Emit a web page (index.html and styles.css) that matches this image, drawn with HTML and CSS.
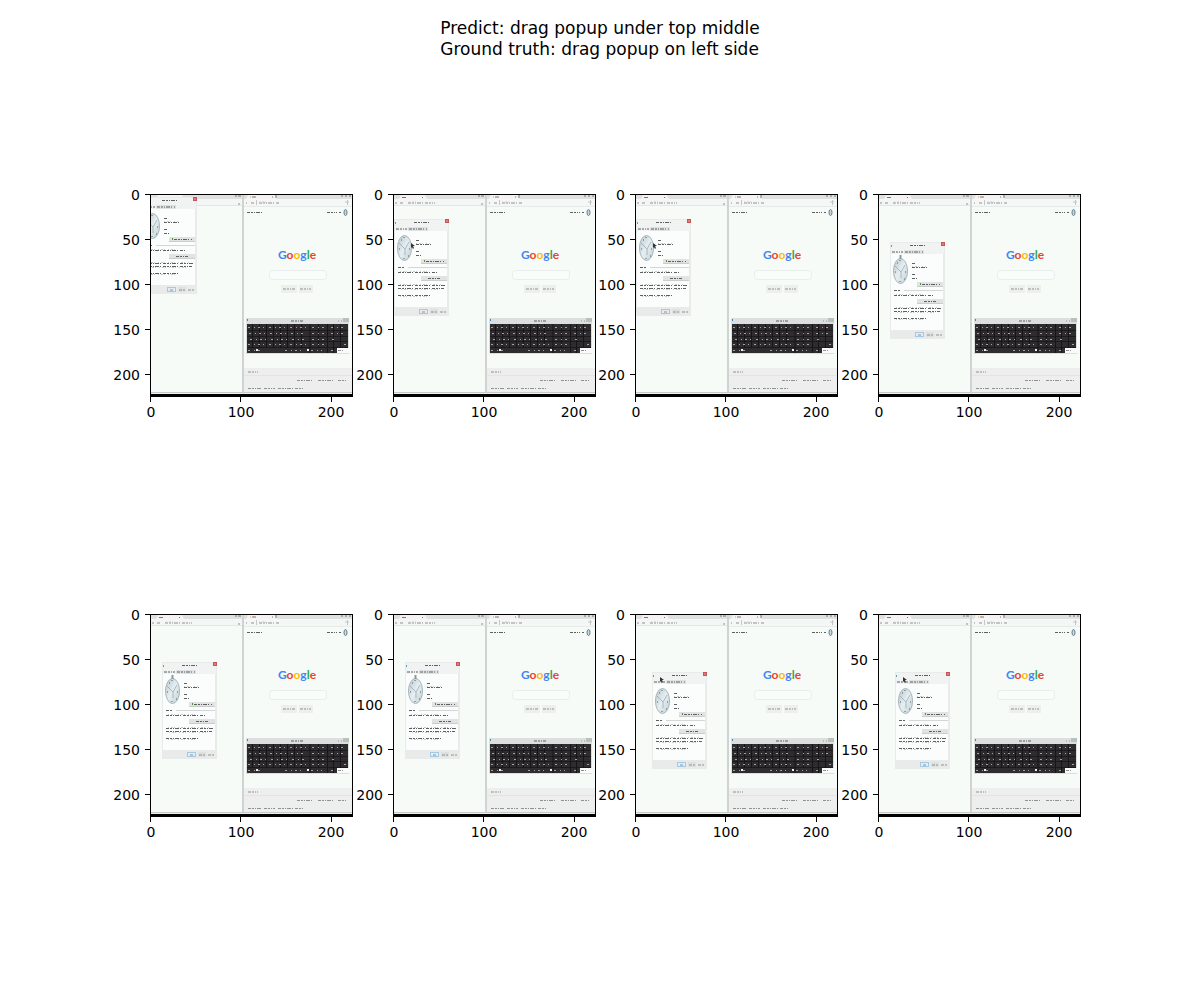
FILE: index.html
```
<!DOCTYPE html>
<html lang="en">
<head>
<meta charset="utf-8">
<meta name="viewport" content="width=device-width, initial-scale=1">
<title>Prediction: drag popup</title>
<link rel="stylesheet" href="styles.css">
</head>
<body>
<svg class="library" aria-hidden="true">
  <defs>
    <linearGradient id="glass" x1="0" y1="0" x2="1" y2="1">
      <stop offset="0" stop-color="#b9c8ce"/><stop offset=".5" stop-color="#e6eef1"/><stop offset="1" stop-color="#c2d0d5"/>
    </linearGradient>
    <clipPath id="frame-clip"><rect x="0" y="0" width="203" height="203"/></clipPath>

    <!-- Two browser windows, on-screen keyboard and taskbar -->
    <g id="desktop">
      <rect width="203" height="203" fill="#f6fbf8"/>
      <rect width="92" height="5" fill="#dfe1e1"/>
      <path d="M6 5 8 1H32L34 5Z" fill="#f6f2f4"/>
      <path d="M9 3.5h4M29 3.5h1M85 2h2M88 2h3" stroke="#777"/>
      <rect y="5" width="92" height="6" fill="#f3f6f5"/>
      <path d="M0 11.5H92" stroke="#e3e8e5"/>
      <path class="ink" d="M2 9h2M7 9h3M15 9h27M88 10h2"/>
      <path class="ink faint" d="M16 8h9"/>
      <rect x="92" width="2" height="199" fill="#cfd3d1"/>
      <rect x="94" width="109" height="5" fill="#dfe1e1"/>
      <path d="M96 5 98 1H125L127 5Z" fill="#f6f2f4"/>
      <path d="M100 3h1" stroke="#e8a33c"/>
      <path d="M102 3h4M122 3h1M126 1v3M191 2h2M195 2h2M199 2h2" stroke="#777"/>
      <rect x="94" y="5" width="109" height="7" fill="#f4f7f6"/>
      <path d="M94 12.500H203" stroke="#e6eae8"/>
      <path d="M106.500 6v5M195 8h4M197.500 6v5" stroke="#c3c8c6"/>
      <path class="ink" d="M96 9h1M101 9h3M109 9h20"/>
      <path class="ink faint" d="M109 8h7"/>
      <path class="ink dark" d="M97 18.500h15M177 18.500h10M189 18.500h2"/>
      <ellipse cx="195.500" cy="18.500" rx="1.500" ry="3" fill="#c9d7df" stroke="#627b87"/>
      <rect x="119.500" y="76.500" width="57" height="9" rx="3" fill="#f8fcfa" stroke="#e9eeeb"/>
      <path d="M131 91h16v8h-16zM149 91h14v8h-14z" fill="#ecefed"/>
      <path class="ink" d="M133 95h12M150 95h11"/>
      <rect x="96" y="124" width="103" height="36" fill="#dcdfde"/>
      <rect x="97" y="125" width="1" height="2" fill="#3c8bc9"/>
      <path class="ink dark" d="M141 127h12"/>
      <path d="M188 127h1M191 127h1" stroke="#999"/>
      <rect x="193" y="124" width="6" height="4" fill="#b9c1bd"/>
      <rect x="97" y="130" width="101" height="29" fill="#2f2c2f"/>
      <path d="M97 136.500H198M97 142.500H198M97 147.500H198M97 153.500H198" stroke="#1c1a1c"/>
      <path d="M102.500 130v24M109.500 130v24M116.500 130v24M123.500 130v24M130.500 130v24M137.500 130v24M144.500 130v24M151.500 130v24M160 130v29M168.500 130v24M177.500 130v29M183.500 130v29M190.500 130v24" stroke="#171517"/>
      <path class="key" d="M98 133.500h58M99 139.500h57M100 145.500h54M98 150.500h59M98 156.500h14M135 156.500h19M162 133.500h14M162 139.500h14M162 145.500h12M162 150.500h12M161 156.500h11M181 133.500h15M181 139.500h15M182 145.500h3M194 150.500h3M181 156.500h4"/>
      <path d="M106 155h2v2h-2zM157 155h2v2h-2z" fill="#eee"/>
      <rect x="187" y="154" width="12" height="5" fill="#fafafa"/>
      <path class="ink" d="M188 156.500h5"/>
      <rect x="94" y="174" width="109" height="24" fill="#eee"/>
      <path d="M94 181.500H203" stroke="#e4e4e4"/>
      <path class="ink" d="M98 178h10M147 186.500h17M168 186.500h15M188 186.500h9M98 194.500h13M114 194.500h11M128 194.500h26"/>
      <rect y="198" width="203" height="1" fill="#c6cac8"/>
      <rect y="199" width="203" height="1" fill="#eceeed"/>
      <rect y="200" width="203" height="3" fill="#000"/>
    </g>

    <!-- Date and time dialog -->
    <g id="dialog">
      <rect width="55" height="97" fill="#e9ebeb"/>
      <rect x="1" y="1" width="53" height="11" fill="#f1f2f2"/>
      <rect x="1" y="12" width="52" height="76" fill="#fbfcfc"/>
      <path d="M1 4h1" stroke="#53a6bf" stroke-width="2"/>
      <rect x="51" y="0" width="4" height="4" fill="#c95358"/>
      <path d="M52 1l2 2M54 1l-2 2" stroke="#eba9aa" stroke-width=".5"/>
      <path class="ink dark" d="M20 3.500h15"/>
      <rect x="14" y="8" width="20" height="4" fill="#dfe2e2"/>
      <path class="ink dark" d="M2 10h11M15 10h18"/>
      <ellipse cx="10.500" cy="29" rx="7" ry="12.500" fill="url(#glass)" stroke="#a6b6bc"/>
      <path d="M5 24l6 6 4-7M11 30v6" fill="none" stroke="#84969e" stroke-width=".6"/>
      <path d="M10 18v1M10 39v1M5 30h1M15 30h1M7 21h1M14 37h1" stroke="#50626b"/>
      <path class="ink dark" d="M22 21.500h4M22 25.500h17M22 32.500h4M22 36.500h5"/>
      <path d="M27 40h26v4H27zM27 57h26v4H27z" fill="#e1e3e3"/>
      <path d="M27 44.500h26M27 61.500h26" stroke="#c9cdcd"/>
      <path d="M30 42h1" stroke="#55923d" stroke-width="2"/>
      <path class="ink dark" d="M32 42.500h18M34 59.500h12"/>
      <path d="M14 48.500h39" stroke="#d3d6d6"/>
      <path class="ink dark" d="M4 48.500h6M4 53.500h39M4 66.500h47M4 69.500h46M4 76.500h33"/>
      <path class="ink faint" d="M6 65.500h42M7 70.500h38M6 52.500h30M22 24.500h14M6 77.500h28"/>
      <rect x="25.500" y="90.500" width="8" height="4" fill="#e3edf4" stroke="#a3c9e4"/>
      <rect x="36" y="90" width="8" height="5" fill="#dfe1e1"/>
      <path class="ink" d="M28 93h3M37 93h6M46 93h7"/>
    </g>
    <path id="stem" d="M10.500 13v4" stroke="#87999f" stroke-width="2"/>
    <path id="pointer" d="M0 0v5l1-1 1 2 1-1-1-2h2Z" fill="#333"/>
    <path id="ticks" d="M-5 .5H0M-5 45.500H0M-5 90.500H0M-5 135.500H0M-5 180.500H0M.5 203v5M90.500 203v5M181.500 203v5"/>
  </defs>
</svg>

<main class="figure">
  <h1 class="title">Predict: drag popup under top middle<br>Ground truth: drag popup on left side</h1>
  <div class="plots">
    <svg class="plot" width="242" height="240" viewBox="-38 -10 242 240" role="img" aria-label="Frame 1">
      <g clip-path="url(#frame-clip)"><use href="#desktop"/><use href="#dialog" x="-8" y="3"/></g>
      <text class="logo" x="147" y="65"><tspan class="blue">G</tspan><tspan class="red">o</tspan><tspan class="yellow">o</tspan><tspan class="blue">g</tspan><tspan class="green">l</tspan><tspan class="red">e</tspan></text>
      <rect class="frame" x=".5" y=".5" width="202" height="202"/><use class="tick" href="#ticks"/>
      <g class="y-axis"><text x="-10" y="6">0</text><text x="-10" y="51">50</text><text x="-10" y="96">100</text><text x="-10" y="141">150</text><text x="-10" y="186">200</text></g>
      <g class="x-axis"><text x="1" y="223">0</text><text x="91" y="223">100</text><text x="181" y="223">200</text></g>
    </svg>
    <svg class="plot" width="242" height="240" viewBox="-38 -10 242 240" role="img" aria-label="Frame 2">
      <g clip-path="url(#frame-clip)"><use href="#desktop"/><use href="#dialog" x="1" y="25"/><use href="#pointer" x="18" y="49"/></g>
      <text class="logo" x="147" y="65"><tspan class="blue">G</tspan><tspan class="red">o</tspan><tspan class="yellow">o</tspan><tspan class="blue">g</tspan><tspan class="green">l</tspan><tspan class="red">e</tspan></text>
      <rect class="frame" x=".5" y=".5" width="202" height="202"/><use class="tick" href="#ticks"/>
      <g class="y-axis"><text x="-10" y="6">0</text><text x="-10" y="51">50</text><text x="-10" y="96">100</text><text x="-10" y="141">150</text><text x="-10" y="186">200</text></g>
      <g class="x-axis"><text x="1" y="223">0</text><text x="91" y="223">100</text><text x="181" y="223">200</text></g>
    </svg>
    <svg class="plot" width="242" height="240" viewBox="-38 -10 242 240" role="img" aria-label="Frame 3">
      <g clip-path="url(#frame-clip)"><use href="#desktop"/><use href="#dialog" x="1" y="25"/><use href="#pointer" x="18" y="49"/></g>
      <text class="logo" x="147" y="65"><tspan class="blue">G</tspan><tspan class="red">o</tspan><tspan class="yellow">o</tspan><tspan class="blue">g</tspan><tspan class="green">l</tspan><tspan class="red">e</tspan></text>
      <rect class="frame" x=".5" y=".5" width="202" height="202"/><use class="tick" href="#ticks"/>
      <g class="y-axis"><text x="-10" y="6">0</text><text x="-10" y="51">50</text><text x="-10" y="96">100</text><text x="-10" y="141">150</text><text x="-10" y="186">200</text></g>
      <g class="x-axis"><text x="1" y="223">0</text><text x="91" y="223">100</text><text x="181" y="223">200</text></g>
    </svg>
    <svg class="plot" width="242" height="240" viewBox="-38 -10 242 240" role="img" aria-label="Frame 4">
      <g clip-path="url(#frame-clip)"><use href="#desktop"/><use href="#dialog" x="12" y="48"/><use href="#stem" x="12" y="48"/></g>
      <text class="logo" x="147" y="65"><tspan class="blue">G</tspan><tspan class="red">o</tspan><tspan class="yellow">o</tspan><tspan class="blue">g</tspan><tspan class="green">l</tspan><tspan class="red">e</tspan></text>
      <rect class="frame" x=".5" y=".5" width="202" height="202"/><use class="tick" href="#ticks"/>
      <g class="y-axis"><text x="-10" y="6">0</text><text x="-10" y="51">50</text><text x="-10" y="96">100</text><text x="-10" y="141">150</text><text x="-10" y="186">200</text></g>
      <g class="x-axis"><text x="1" y="223">0</text><text x="91" y="223">100</text><text x="181" y="223">200</text></g>
    </svg>
    <svg class="plot" width="242" height="240" viewBox="-38 -10 242 240" role="img" aria-label="Frame 5">
      <g clip-path="url(#frame-clip)"><use href="#desktop"/><use href="#dialog" x="12" y="48"/><use href="#stem" x="12" y="48"/></g>
      <text class="logo" x="147" y="65"><tspan class="blue">G</tspan><tspan class="red">o</tspan><tspan class="yellow">o</tspan><tspan class="blue">g</tspan><tspan class="green">l</tspan><tspan class="red">e</tspan></text>
      <rect class="frame" x=".5" y=".5" width="202" height="202"/><use class="tick" href="#ticks"/>
      <g class="y-axis"><text x="-10" y="6">0</text><text x="-10" y="51">50</text><text x="-10" y="96">100</text><text x="-10" y="141">150</text><text x="-10" y="186">200</text></g>
      <g class="x-axis"><text x="1" y="223">0</text><text x="91" y="223">100</text><text x="181" y="223">200</text></g>
    </svg>
    <svg class="plot" width="242" height="240" viewBox="-38 -10 242 240" role="img" aria-label="Frame 6">
      <g clip-path="url(#frame-clip)"><use href="#desktop"/><use href="#dialog" x="12" y="48"/><use href="#stem" x="12" y="48"/></g>
      <text class="logo" x="147" y="65"><tspan class="blue">G</tspan><tspan class="red">o</tspan><tspan class="yellow">o</tspan><tspan class="blue">g</tspan><tspan class="green">l</tspan><tspan class="red">e</tspan></text>
      <rect class="frame" x=".5" y=".5" width="202" height="202"/><use class="tick" href="#ticks"/>
      <g class="y-axis"><text x="-10" y="6">0</text><text x="-10" y="51">50</text><text x="-10" y="96">100</text><text x="-10" y="141">150</text><text x="-10" y="186">200</text></g>
      <g class="x-axis"><text x="1" y="223">0</text><text x="91" y="223">100</text><text x="181" y="223">200</text></g>
    </svg>
    <svg class="plot" width="242" height="240" viewBox="-38 -10 242 240" role="img" aria-label="Frame 7">
      <g clip-path="url(#frame-clip)"><use href="#desktop"/><use href="#dialog" x="17" y="58"/><use href="#pointer" x="25" y="63"/></g>
      <text class="logo" x="147" y="65"><tspan class="blue">G</tspan><tspan class="red">o</tspan><tspan class="yellow">o</tspan><tspan class="blue">g</tspan><tspan class="green">l</tspan><tspan class="red">e</tspan></text>
      <rect class="frame" x=".5" y=".5" width="202" height="202"/><use class="tick" href="#ticks"/>
      <g class="y-axis"><text x="-10" y="6">0</text><text x="-10" y="51">50</text><text x="-10" y="96">100</text><text x="-10" y="141">150</text><text x="-10" y="186">200</text></g>
      <g class="x-axis"><text x="1" y="223">0</text><text x="91" y="223">100</text><text x="181" y="223">200</text></g>
    </svg>
    <svg class="plot" width="242" height="240" viewBox="-38 -10 242 240" role="img" aria-label="Frame 8">
      <g clip-path="url(#frame-clip)"><use href="#desktop"/><use href="#dialog" x="17" y="58"/><use href="#pointer" x="25" y="63"/></g>
      <text class="logo" x="147" y="65"><tspan class="blue">G</tspan><tspan class="red">o</tspan><tspan class="yellow">o</tspan><tspan class="blue">g</tspan><tspan class="green">l</tspan><tspan class="red">e</tspan></text>
      <rect class="frame" x=".5" y=".5" width="202" height="202"/><use class="tick" href="#ticks"/>
      <g class="y-axis"><text x="-10" y="6">0</text><text x="-10" y="51">50</text><text x="-10" y="96">100</text><text x="-10" y="141">150</text><text x="-10" y="186">200</text></g>
      <g class="x-axis"><text x="1" y="223">0</text><text x="91" y="223">100</text><text x="181" y="223">200</text></g>
    </svg>
  </div>
</main>
</body>
</html>
```

FILE: styles.css
```
body {
  margin: 0;
  background: #fff;
  color: #000;
  font-family: "DejaVu Sans", sans-serif;
}

.library {
  display: block;
  width: 0;
  height: 0;
}

.figure {
  display: flex;
  flex-direction: column;
  gap: 124px;
  padding: 18px 118px 40px 112px;
}

.title {
  align-self: center;
  margin: 0 0 0 6px;
  font-size: 17px;
  font-weight: 400;
  line-height: 21px;
}

.plots {
  display: flex;
  flex-wrap: wrap;
  justify-content: space-between;
  row-gap: 180px;
}

.plot {
  display: block;
  flex: none;
  overflow: visible;
  font-size: 14px;
}

.frame,
.tick {
  fill: none;
  stroke: #000;
}

.y-axis {
  text-anchor: end;
}

.x-axis {
  text-anchor: middle;
}

.ink {
  fill: none;
  stroke: #8d9391;
  stroke-dasharray: 3 1 2 1 1 1 4 1 1 2;
}

.ink.dark {
  stroke: #5c6061;
}

.ink.faint {
  stroke: #c5c9c8;
  stroke-dasharray: 1 2 2 1 1 3;
}

.key {
  fill: none;
  stroke: #a3a1a3;
  stroke-dasharray: 2 4 1 3 2 3 1 5;
}

.logo {
  font-family: Lato, "Liberation Sans", sans-serif;
  font-size: 12px;
  font-weight: 700;
  text-anchor: middle;
}

.blue {
  fill: #4285f4;
}

.red {
  fill: #ea4335;
}

.yellow {
  fill: #fbbc05;
}

.green {
  fill: #34a853;
}
```
